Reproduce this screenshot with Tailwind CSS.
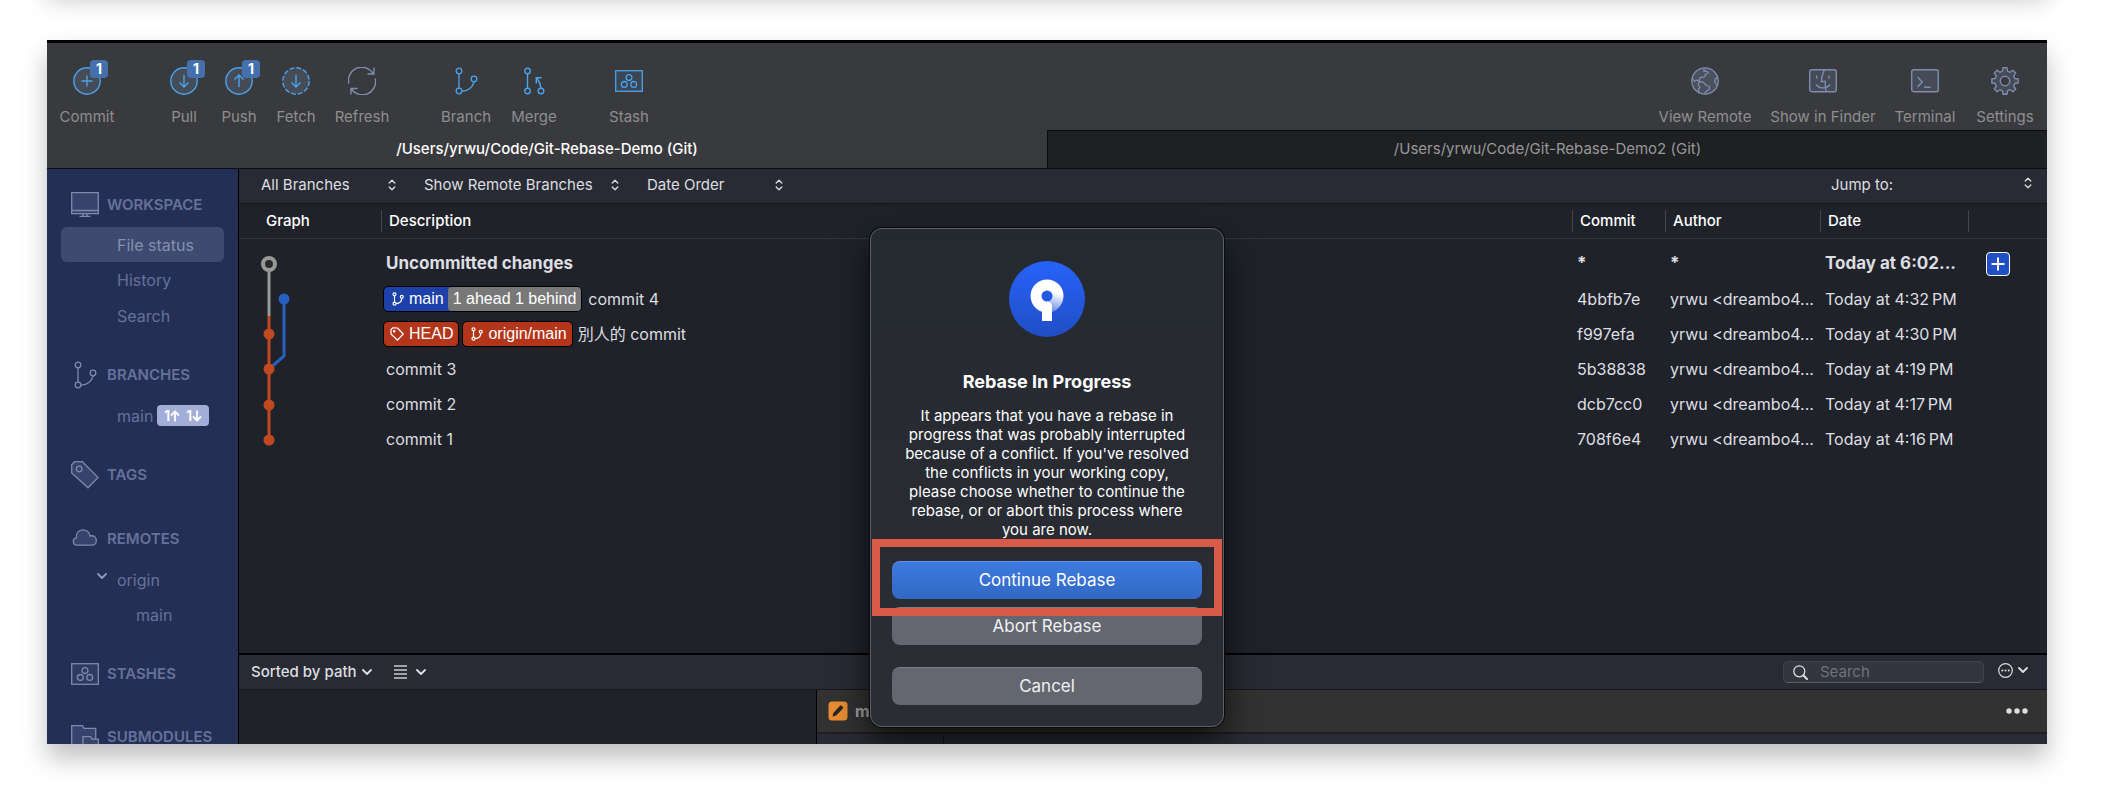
<!DOCTYPE html>
<html lang="en">
<head>
<meta charset="utf-8">
<meta name="viewport" content="width=device-width, initial-scale=1">
<title>Git-Rebase-Demo (Git)</title>
<script src="https://cdn.jsdelivr.net/npm/@tailwindcss/browser@4"></script>
</head>
<body class="flex h-screen flex-col overflow-hidden bg-white font-[Inter,'Noto_Sans_CJK_TC',sans-serif] text-[15px] text-[#dddee1]">

<svg class="hidden" aria-hidden="true">
  <symbol id="branch" viewBox="0 0 28 28"><g fill="none" stroke="currentColor" stroke-width="1.3"><circle cx="7" cy="4" r="2.8"/><circle cx="7" cy="24" r="2.8"/><circle cx="22" cy="12" r="2.8"/><path d="M7 6.800V21.200M9.800 24C16 24.500 21 20 22 14.800"/></g></symbol>
  <symbol id="stash" viewBox="0 0 28 28"><rect x=".7" y="3.700" width="26.600" height="20.600" fill="currentColor" fill-opacity=".12" stroke="currentColor" stroke-width="1.300"/><g fill="none" stroke="currentColor" stroke-width="1.300"><circle cx="14" cy="10.600" r="2.900"/><circle cx="9.300" cy="17.400" r="2.900"/><circle cx="18.700" cy="17.400" r="2.900"/></g></symbol>
  <symbol id="updown" viewBox="0 0 8 12"><path d="M1.200 4 4 1.200 6.800 4M1.200 8 4 10.800 6.800 8" fill="none" stroke="currentColor" stroke-width="1.300" stroke-linecap="round" stroke-linejoin="round"/></symbol>
  <symbol id="down" viewBox="0 0 10 6"><path d="M1 1 5 5 9 1" fill="none" stroke="currentColor" stroke-width="1.800" stroke-linecap="round" stroke-linejoin="round"/></symbol>
  <symbol id="smallbranch" viewBox="0 0 12 14"><g fill="none" stroke="currentColor" stroke-width="1.200"><circle cx="2.500" cy="2.300" r="1.500"/><circle cx="2.500" cy="11.700" r="1.500"/><circle cx="9.800" cy="4.800" r="1.500"/><path d="M2.500 3.800V10.200M4 11.700C7.500 11.400 9.700 9.500 9.800 6.300"/></g></symbol>
</svg>

<div class="mr-[65px] -mt-14 ml-[47px] h-10 shrink-0 bg-white shadow-[0_14px_24px_rgba(0,0,0,0.25)]"></div>

<div class="relative mt-14 mr-[65px] mb-[46px] ml-[47px] flex min-h-0 flex-1 flex-col border-t-[3px] border-black bg-[#393a3d] shadow-[0_14px_24px_rgba(0,0,0,0.25)]">

  <header class="flex h-[87px] shrink-0 items-start justify-between px-3 pt-6 text-[#8e8e90]">
    <nav class="flex gap-[52px]" aria-label="Repository actions">
      <button class="flex w-14 flex-col items-center gap-3 leading-5">
        <span class="relative text-[#4aa3ec]">
          <svg class="size-7" viewBox="0 0 28 28" fill="none" stroke="currentColor" stroke-width="1.400"><circle cx="14" cy="14" r="13.200" fill="#464c57"/><path d="M14 8.500v11M8.500 14h11"/></svg>
          <span class="absolute -top-[7px] left-[17px] flex size-[18px] items-center justify-center rounded bg-[#4470ae] text-[14px] font-bold text-white">1</span>
        </span>
        Commit
      </button>
      <div class="flex gap-5">
        <button class="flex w-[34px] flex-col items-center gap-3 leading-5">
          <span class="relative text-[#4aa3ec]">
            <svg class="size-7" viewBox="0 0 28 28" fill="none" stroke="currentColor" stroke-width="1.400"><circle cx="14" cy="14" r="13.200" fill="#464c57"/><path d="M14 8v12M9.500 15.500 14 20l4.500-4.500"/></svg>
            <span class="absolute -top-[7px] left-[17px] flex size-[18px] items-center justify-center rounded bg-[#4470ae] text-[14px] font-bold text-white">1</span>
          </span>
          Pull
        </button>
        <button class="flex w-9 flex-col items-center gap-3 leading-5">
          <span class="relative text-[#4aa3ec]">
            <svg class="size-7" viewBox="0 0 28 28" fill="none" stroke="currentColor" stroke-width="1.400"><circle cx="14" cy="14" r="13.200" fill="#464c57"/><path d="M14 20V8M9.500 12.500 14 8l4.500 4.500"/></svg>
            <span class="absolute -top-[7px] left-[17px] flex size-[18px] items-center justify-center rounded bg-[#4470ae] text-[14px] font-bold text-white">1</span>
          </span>
          Push
        </button>
        <button class="flex w-[38px] flex-col items-center gap-3 leading-5">
          <svg class="size-7 text-[#4aa3ec]" viewBox="0 0 28 28" fill="none" stroke="currentColor" stroke-width="1.400"><circle cx="14" cy="14" r="13.200" fill="#464c57" stroke-dasharray="5 1.900"/><path d="M14 8v12M9.500 15.500 14 20l4.500-4.500"/></svg>
          Fetch
        </button>
        <button class="flex w-[54px] flex-col items-center gap-3 leading-5">
          <svg class="size-7 text-[#7f8cae]" viewBox="0 0 28 28" fill="none" stroke="currentColor" stroke-width="1.400"><path d="M.8 16.500A13.200 13.200 0 0 1 25 6.700M26 .5V7H19.500M27.200 11.500A13.200 13.200 0 0 1 3 21.300M3 27.500V21.500H9.500"/></svg>
          Refresh
        </button>
      </div>
      <div class="flex gap-5">
        <button class="flex w-[50px] flex-col items-center gap-3 leading-5">
          <svg class="size-7 text-[#4aa3ec]"><use href="#branch"/></svg>
          Branch
        </button>
        <button class="flex w-[46px] flex-col items-center gap-3 leading-5">
          <svg class="size-7 text-[#4aa3ec]" viewBox="0 0 28 28" fill="none" stroke="currentColor" stroke-width="1.400"><circle cx="7.500" cy="4" r="2.800"/><circle cx="7.500" cy="24" r="2.800"/><circle cx="21" cy="24" r="2.800"/><path d="M7.500 6.800V21.200M21 21.200C20.500 17 19.500 14.500 17 11.500M16.300 16.500V10.800H21.700"/></svg>
          Merge
        </button>
      </div>
      <button class="flex w-10 flex-col items-center gap-3 leading-5">
        <svg class="size-7 text-[#4aa3ec]"><use href="#stash"/></svg>
        Stash
      </button>
    </nav>
    <nav class="flex gap-5 whitespace-nowrap" aria-label="Tools">
      <button class="flex w-[92px] flex-col items-center gap-3 leading-5">
        <svg class="size-7 text-[#7f8cae]" viewBox="0 0 28 28" fill="none" stroke="currentColor" stroke-width="1.300" stroke-linejoin="round"><circle cx="14" cy="14" r="13.200" fill="#4b505d"/><path d="M13.500 1.500 12.500 4 16.500 4.500 17.500 6 14 7.500 14.500 9 12 10.500 10.500 10 8 12.500 8.500 14.500 5.500 13 3.500 14.500 1.500 11.500M8.500 14.500 7 17.500 9 20.500 7.500 22 8 25.500M8.500 14.500 12.500 15.500 15.500 18.500 18.500 19.500 18.500 22 15.500 24 13.500 26.500M27 11 24.500 11.500 23.500 14.500 25.500 17.500 26.500 18"/></svg>
        View Remote
      </button>
      <button class="flex w-[104px] flex-col items-center gap-3 leading-5">
        <svg class="size-7 text-[#7f8cae]" viewBox="0 0 28 28" fill="none" stroke="currentColor" stroke-width="1.400"><rect x=".7" y="2.700" width="26.600" height="22" rx="2" fill="#464c57"/><path d="M15.300 3C13.500 7 12.500 10.500 12.300 14.500H16.300C16 18 16.300 21.500 17.300 24.500M7.700 8.500v3M20 8.500v3M6.800 17.500C10.500 22 17.500 22 21.200 17.500"/></svg>
        Show in Finder
      </button>
      <button class="flex w-[60px] flex-col items-center gap-3 leading-5">
        <svg class="size-7 text-[#7f8cae]" viewBox="0 0 28 28" fill="none" stroke="currentColor" stroke-width="1.400"><rect x=".7" y="2.700" width="26.600" height="22" rx="2" fill="#464c57"/><path d="M6.500 10 11.300 15 6.500 20M13 20.300h6.500"/></svg>
        Terminal
      </button>
      <button class="flex w-[60px] flex-col items-center gap-3 leading-5">
        <svg class="size-7 text-[#7f8cae]" viewBox="0 0 28 28" stroke="currentColor" stroke-width="1.400" stroke-linejoin="round"><path fill="#464c57" d="M11.500 4.200 12 .8h4l.5 3.400 2.600 1.100L21.900 3.300l2.800 2.800-2 2.800 1.100 2.600 3.400.5v4l-3.400.5-1.100 2.600 2 2.800-2.800 2.800-2.800-2-2.600 1.100-.5 3.400h-4l-.5-3.400-2.600-1.100-2.800 2-2.800-2.800 2-2.800-1.100-2.600L.8 16v-4l3.400-.5 1.100-2.600-2-2.800L6.100 3.300l2.800 2z"/><circle cx="14" cy="14" r="4.700" fill="#393a3d"/></svg>
        Settings
      </button>
    </nav>
  </header>

  <div class="grid h-[39px] shrink-0 grid-cols-2 border-b border-[#0c0c0d]" role="tablist">
    <button role="tab" aria-selected="true" class="font-medium text-white">/Users/yrwu/Code/Git-Rebase-Demo (Git)</button>
    <button role="tab" aria-selected="false" class="border-t border-l border-[#0c0c0d] bg-[#1f2022] text-[#98989a]">/Users/yrwu/Code/Git-Rebase-Demo2 (Git)</button>
  </div>

  <div class="flex min-h-0 flex-1">

    <aside class="flex w-48 shrink-0 flex-col overflow-hidden border-r border-black bg-[#242f55] pt-5 text-base text-[#66719a]">
      <h2 class="flex h-8 shrink-0 items-center gap-2 pl-6 text-[15px] font-semibold">
        <svg class="size-7 text-[#7e89ad]" viewBox="0 0 28 28" fill="none" stroke="currentColor" stroke-width="1.300"><path d="M.7 1.700h26.600v21H.7z" fill="#37436a"/><path d="M.7 19.500h26.600M12 22.700v2.500M16 22.700v2.500M8.500 25.300h11"/></svg>
        WORKSPACE
      </h2>
      <a href="#" class="mx-[14px] mt-[6px] flex h-[35px] shrink-0 items-center rounded-md bg-[#3e4a6f] pl-14 text-[#858fb0]">File status</a>
      <a href="#" class="flex h-9 shrink-0 items-center pl-[70px]">History</a>
      <a href="#" class="flex h-[35px] shrink-0 items-center pl-[70px]">Search</a>

      <h2 class="mt-[26px] flex h-8 shrink-0 items-center gap-2 pl-6 text-[15px] font-semibold">
        <svg class="size-7 text-[#7e89ad]"><use href="#branch"/></svg>
        BRANCHES
      </h2>
      <a href="#" class="mt-[7px] flex h-[35px] shrink-0 items-center gap-1 pl-[70px]">main
        <span class="flex h-[21px] items-center gap-[6px] rounded bg-[#a3aed8] px-[7px] text-[14px] font-semibold text-white">
          <span class="flex items-center">1<svg class="h-3 w-[10px]" viewBox="0 0 10 12" fill="none" stroke="currentColor" stroke-width="1.800"><path d="M5 11.500V1.500M1 5.500l4-4 4 4"/></svg></span>
          <span class="flex items-center">1<svg class="h-3 w-[10px]" viewBox="0 0 10 12" fill="none" stroke="currentColor" stroke-width="1.800"><path d="M5 .5v10M1 6.500l4 4 4-4"/></svg></span>
        </span>
      </a>

      <h2 class="mt-[26px] flex h-8 shrink-0 items-center gap-2 pl-6 text-[15px] font-semibold">
        <svg class="size-7 text-[#7e89ad]" viewBox="0 0 28 28" fill="#37436a" stroke="currentColor" stroke-width="1.300"><path d="M.7 3.700 3.700.7H11.300L27.200 16.500 17 26.800.7 12z"/><circle cx="8.200" cy="8" r="2.800"/></svg>
        TAGS
      </h2>

      <h2 class="mt-8 flex h-8 shrink-0 items-center gap-2 pl-6 text-[15px] font-semibold">
        <svg class="size-7 text-[#7e89ad]" viewBox="0 0 28 28" fill="#37436a" stroke="currentColor" stroke-width="1.300"><path d="M6 20.200a3.700 3.700 0 0 1-.8-7.300C4.800 2.500 18 2.500 19 11c4.500-1.200 6.500 2 6.300 4.700 0 2.800-2 4.500-4.300 4.500z"/></svg>
        REMOTES
      </h2>
      <a href="#" class="mt-[7px] flex h-[35px] shrink-0 items-center gap-[10px] pl-[50px]"><svg class="mb-2 h-[6px] w-[10px] text-[#8f99b9]"><use href="#down"/></svg>origin</a>
      <a href="#" class="flex h-[35px] shrink-0 items-center pl-[89px]">main</a>

      <h2 class="mt-[26px] flex h-8 shrink-0 items-center gap-2 pl-6 text-[15px] font-semibold">
        <svg class="size-7 text-[#7e89ad]"><use href="#stash"/></svg>
        STASHES
      </h2>
      <h2 class="mt-[31px] flex h-8 shrink-0 items-center gap-2 pl-6 text-[15px] font-semibold">
        <svg class="size-7 text-[#7e89ad]" viewBox="0 0 28 28" fill="#37436a" stroke="currentColor" stroke-width="1.300"><path d="M.7 2.700H11.500L13 5.300H24.700V26H.7z"/><path d="M12 13.700h7.500l1.500 2.500h6.300V27H12z"/></svg>
        SUBMODULES
      </h2>
    </aside>

    <main class="flex min-w-0 flex-1 flex-col bg-[#20222a]">
      <div class="flex h-[35px] shrink-0 items-center gap-7 border-b border-[#16171b] bg-[#292b34] pr-[15px] pb-[2px] pl-[22px]">
        <div class="relative w-[135px]">
          <select aria-label="Branches shown" class="block w-full appearance-none bg-transparent"><option>All Branches</option></select>
          <svg class="pointer-events-none absolute top-[5px] right-0 h-3 w-2"><use href="#updown"/></svg>
        </div>
        <div class="relative w-[195px]">
          <select aria-label="Remote branches" class="block w-full appearance-none bg-transparent"><option>Show Remote Branches</option></select>
          <svg class="pointer-events-none absolute top-[5px] right-0 h-3 w-2"><use href="#updown"/></svg>
        </div>
        <div class="relative w-[136px]">
          <select aria-label="Sort order" class="block w-full appearance-none bg-transparent"><option>Date Order</option></select>
          <svg class="pointer-events-none absolute top-[5px] right-0 h-3 w-2"><use href="#updown"/></svg>
        </div>
        <div class="ml-auto flex w-[201px] items-center">
          <label for="jump" class="shrink-0">Jump to:</label>
          <div class="relative flex-1">
            <select id="jump" class="block w-full appearance-none bg-transparent"><option></option></select>
            <svg class="pointer-events-none absolute top-[3px] right-0 h-3 w-2"><use href="#updown"/></svg>
          </div>
        </div>
      </div>

      <div class="min-h-0 flex-1 overflow-hidden">
        <table class="w-full table-fixed border-separate border-spacing-0 text-left text-base">
          <colgroup><col class="w-[142px]"><col><col class="w-[93px]"><col class="w-[155px]"><col class="w-[148px]"><col class="w-[79px]"></colgroup>
          <thead class="text-[15px] text-white">
            <tr class="h-[35px]">
              <th class="border-b border-[#33363f] pl-[27px] font-medium">Graph</th>
              <th class="border-b border-[#33363f] font-medium"><div class="flex h-[22px] items-center border-l border-[#44464d] pl-[7px]">Description</div></th>
              <th class="border-b border-[#33363f] font-medium"><div class="flex h-[22px] items-center border-l border-[#44464d] pl-[7px]">Commit</div></th>
              <th class="border-b border-[#33363f] font-medium"><div class="flex h-[22px] items-center border-l border-[#44464d] pl-[7px]">Author</div></th>
              <th class="border-b border-[#33363f] font-medium"><div class="flex h-[22px] items-center border-l border-[#44464d] pl-[7px]">Date</div></th>
              <th class="border-b border-[#33363f] font-medium" aria-label="Actions"><div class="h-[22px] border-l border-[#44464d]"></div></th>
            </tr>
          </thead>
          <tbody>
            <tr class="h-[42px] text-[17px] leading-6 font-bold">
              <td rowspan="6" class="align-top">
                <svg class="h-[217px] w-full" fill="none" stroke-width="3" aria-label="Commit graph" role="img">
                  <path d="M45 60V117L30 130" stroke="#265fbd"/>
                  <path d="M30 25V77" stroke="#999"/>
                  <path d="M30 77V201" stroke="#c0491f"/>
                  <circle cx="30" cy="25" r="6" fill="#2a2a2c" stroke="#999" stroke-width="4"/>
                  <circle cx="45" cy="60" r="5.500" fill="#265fbd"/>
                  <g fill="#c0491f"><circle cx="30" cy="95" r="5.500"/><circle cx="30" cy="130" r="5.500"/><circle cx="30" cy="166" r="5.500"/><circle cx="30" cy="201" r="5.500"/></g>
                </svg>
              </td>
              <td class="pt-[6px] pl-[5px]">Uncommitted changes</td>
              <td class="pt-[6px] pl-[5px]">*</td>
              <td class="pt-[6px] pl-[5px]">*</td>
              <td class="truncate pt-[6px] pl-[5px]">Today at 6:02...</td>
              <td class="pt-[8px] pl-[18px]">
                <button aria-label="Add" class="flex size-6 items-center justify-center rounded border-[1px] border-white bg-[#2150c4]"><svg class="size-4" viewBox="0 0 16 16" stroke="#fff" stroke-width="2"><path d="M8 1.500v13M1.500 8h13"/></svg></button>
              </td>
            </tr>
            <tr class="h-[35px]">
              <td class="pl-[2px]">
                <div class="flex items-center gap-[6px]">
                  <span class="flex h-[26px] items-center rounded-[5px] border border-black bg-[#1d41a8] font-['Liberation_Sans',Arial,sans-serif] text-white">
                    <span class="flex items-center gap-[5px] pr-1 pl-2"><svg class="h-[14px] w-3"><use href="#smallbranch"/></svg>main</span>
                    <span class="flex h-6 items-center rounded bg-[#787878] px-[5px]">1 ahead 1 behind</span>
                  </span>
                  commit 4
                </div>
              </td>
              <td class="pl-[5px]">4bbfb7e</td><td class="pl-[5px] whitespace-nowrap">yrwu &lt;dreambo4...</td><td class="pl-[5px] whitespace-nowrap">Today at 4:32&#8239;PM</td><td></td>
            </tr>
            <tr class="h-[35px]">
              <td class="pl-[2px]">
                <div class="flex items-center">
                  <span class="flex h-[26px] items-center gap-[5px] rounded-[5px] border border-black bg-[#b3361b] pr-[5px] pl-[6px] font-['Liberation_Sans',Arial,sans-serif] text-white"><svg class="h-[14px] w-[14px]" viewBox="0 0 14 14" fill="none" stroke="currentColor" stroke-width="1.200" stroke-linejoin="round"><path d="M1 2.500 3 .8 7.500 1 13.200 7 7.500 13.200 1 7z"/><circle cx="4.200" cy="4.200" r=".7" fill="currentColor"/></svg>HEAD</span>
                  <span class="ml-[3px] flex h-[26px] items-center gap-[5px] rounded-[5px] border border-black bg-[#b3361b] pr-[5px] pl-2 font-['Liberation_Sans',Arial,sans-serif] text-white"><svg class="h-[14px] w-3"><use href="#smallbranch"/></svg>origin/main</span>
                  <span class="ml-[5px]">別人的 commit</span>
                </div>
              </td>
              <td class="pl-[5px]">f997efa</td><td class="pl-[5px] whitespace-nowrap">yrwu &lt;dreambo4...</td><td class="pl-[5px] whitespace-nowrap">Today at 4:30&#8239;PM</td><td></td>
            </tr>
            <tr class="h-[35px]"><td class="pl-[5px]">commit 3</td><td class="pl-[5px]">5b38838</td><td class="pl-[5px] whitespace-nowrap">yrwu &lt;dreambo4...</td><td class="pl-[5px] whitespace-nowrap">Today at 4:19&#8239;PM</td><td></td></tr>
            <tr class="h-[35px]"><td class="pl-[5px]">commit 2</td><td class="pl-[5px]">dcb7cc0</td><td class="pl-[5px] whitespace-nowrap">yrwu &lt;dreambo4...</td><td class="pl-[5px] whitespace-nowrap">Today at 4:17&#8239;PM</td><td></td></tr>
            <tr class="h-[35px]"><td class="pl-[5px]">commit 1</td><td class="pl-[5px]">708f6e4</td><td class="pl-[5px] whitespace-nowrap">yrwu &lt;dreambo4...</td><td class="pl-[5px] whitespace-nowrap">Today at 4:16&#8239;PM</td><td></td></tr>
          </tbody>
        </table>
      </div>

      <div class="flex h-[37px] shrink-0 items-center border-t-2 border-b border-t-black border-b-[#16171b] bg-[#292b34] pr-[19px] pl-3">
        <button class="flex items-center gap-[5px] font-medium">Sorted by path <svg class="h-[6px] w-[10px]"><use href="#down"/></svg></button>
        <button aria-label="View as list" class="ml-[22px] flex items-center gap-[9px]"><svg class="h-[14px] w-[13px]" viewBox="0 0 13 14" stroke="#c9c9cc" stroke-width="1.400"><path d="M0 1h13M0 5h13M0 9h13M0 13h13"/></svg><svg class="h-[6px] w-[10px]"><use href="#down"/></svg></button>
        <div class="ml-auto flex h-[22px] w-[201px] items-center gap-3 rounded-[5px] border border-[#3f424b] border-b-[#5a5d65] bg-[#33363f] px-[9px]">
          <svg class="size-[15px] shrink-0" viewBox="0 0 15 15" fill="none" stroke="currentColor" stroke-width="1.300" stroke-linecap="round"><circle cx="6.300" cy="6.300" r="5.500"/><path d="M10.500 10.500 14 14" stroke-width="2"/></svg>
          <input type="search" aria-label="Search" placeholder="Search" class="w-full min-w-0 bg-transparent placeholder:text-[#6f727a] focus:outline-none">
        </div>
        <button aria-label="More options" class="mb-1 ml-[14px] flex items-center gap-[5px]"><svg class="size-[15px]" viewBox="0 0 15 15"><circle cx="7.500" cy="7.500" r="6.800" fill="none" stroke="currentColor" stroke-width="1.200"/><g fill="currentColor"><circle cx="4.300" cy="7.500" r="1"/><circle cx="7.500" cy="7.500" r="1"/><circle cx="10.700" cy="7.500" r="1"/></g></svg><svg class="h-[6px] w-[10px]"><use href="#down"/></svg></button>
      </div>

      <div class="flex h-[54px] shrink-0">
        <div class="w-[577px] shrink-0"></div>
        <div class="flex min-w-0 flex-1 flex-col border-l border-black">
          <div class="flex h-11 items-center gap-[7px] border-b-2 border-[#1f1f20] bg-[#323232] pr-[19px] pl-[11px]">
            <svg class="size-5" viewBox="0 0 20 20"><rect x=".5" y=".5" width="19" height="19" rx="3.500" fill="#e88e31"/><path d="M4.500 15.500 5.300 12 11.800 5 13 4.200 15.300 6.300 14.700 7.800 8.200 14.600z" fill="#2a2628"/></svg>
            <span class="text-base font-bold text-[#a5a5a5]">main</span>
            <button aria-label="File actions" class="ml-auto"><svg class="h-[6px] w-[22px]" viewBox="0 0 22 6" fill="currentColor"><circle cx="3" cy="3" r="2.700"/><circle cx="11" cy="3" r="2.700"/><circle cx="19" cy="3" r="2.700"/></svg></button>
          </div>
          <div class="flex flex-1 bg-[#292b34]"><div class="w-[127px] border-r border-[#1a1b1f]"></div></div>
        </div>
      </div>
    </main>
  </div>

  <div class="absolute inset-0 overflow-hidden">
    <div role="dialog" aria-labelledby="rebase-title" class="absolute top-[185px] left-1/2 flex w-[354px] -translate-x-1/2 flex-col items-center rounded-xl border border-[#5d5f64] bg-linear-to-b from-[#252930] to-[#2b2d34] px-[21px] pt-[31px] pb-[21px] text-white shadow-[0_0_0_1px_#0b0b0d,0_16px_36px_rgba(0,0,0,0.7)]">
      <svg class="size-[78px]" viewBox="0 0 78 78" aria-hidden="true">
        <defs>
          <linearGradient id="disc" x1="0" y1="0" x2="0" y2="1"><stop offset="0" stop-color="#2763fa"/><stop offset="1" stop-color="#204ec4"/></linearGradient>
          <linearGradient id="fade" gradientUnits="userSpaceOnUse" x1="50" y1="33" x2="44" y2="52"><stop offset="0" stop-color="#fff"/><stop offset="1" stop-color="#fff" stop-opacity=".3"/></linearGradient>
        </defs>
        <circle cx="39" cy="39" r="38" fill="url(#disc)"/>
        <path d="M39 25A11 11 0 0 1 39 47" fill="none" stroke="url(#fade)" stroke-width="11"/>
        <path d="M39 19.500A16.500 16.500 0 0 0 34 51.700V61H44V46.500Q44 41.500 39 41.500A5.500 5.500 0 0 1 39 30.500Z" fill="#fff"/>
      </svg>
      <h1 id="rebase-title" class="mt-8 text-lg leading-6 font-bold">Rebase In Progress</h1>
      <p class="mt-3 text-center text-[15px] leading-[19px] whitespace-nowrap">It appears that you have a rebase in<br>progress that was probably interrupted<br>because of a conflict. If you've resolved<br>the conflicts in your working copy,<br>please choose whether to continue the<br>rebase, or or abort this process where<br>you are now.</p>
      <button class="mt-[22px] h-[38px] w-full rounded-lg border-t border-[#5f93ea] bg-linear-to-b from-[#3d7ae0] to-[#3268c4] text-[17px]">Continue Rebase</button>
      <button class="mt-2 h-[38px] w-full rounded-lg border-t border-[#7c7f86] bg-[#64676f] text-[17px] text-[#eef0f5]">Abort Rebase</button>
      <button class="mt-[22px] h-[38px] w-full rounded-lg border-t border-[#7c7f86] bg-[#64676f] text-[17px] text-[#eef0f5]">Cancel</button>
      <div class="pointer-events-none absolute inset-x-[1px] top-[310px] h-[77px] border-8 border-[#d95a47]"></div>
    </div>
  </div>
</div>
</body>
</html>
